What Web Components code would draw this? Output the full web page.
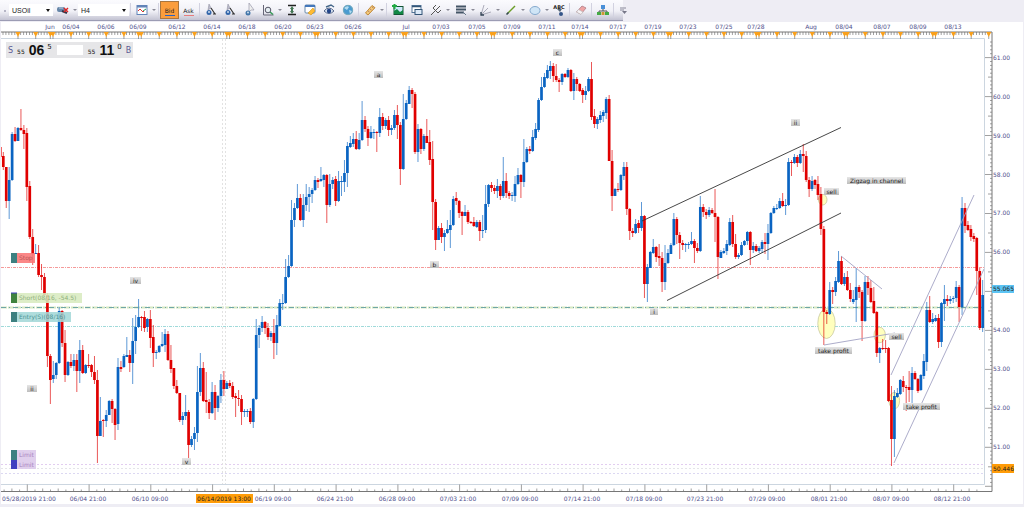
<!DOCTYPE html>
<html lang="en">
<head>
<meta charset="utf-8">
<title>USOil H4</title>
<style>
  body {
    margin: 0;
    background: #eeedf4;
    font-family: "DejaVu Sans", sans-serif;
    font-size: 6px;
    color: #50508c;
  }
</style>
</head>
<body>
<trade-app></trade-app>

<template id="app-template">
  <style>
    :host { display: block; }
    main { margin: 0 1px 3px; background: #fff; }
  </style>
  <trade-toolbar></trade-toolbar>
  <main><price-chart></price-chart></main>
</template>

<template id="toolbar-template">
  <style>
    :host { display: block; padding-bottom: 1px; }
    .bar {
      display: flex;
      align-items: stretch;
      width: fit-content;
      height: 20px;
      border-bottom: 1px solid #9c9cb4;
      background: linear-gradient(#fbfbfe, #f1f1f7 55%, #c3c3d2);
    }
    .grip { width: 9px; background: radial-gradient(circle at 5px 11px, #b5b5c5 1px, transparent 1px); }
    .sep { width: 1px; margin: 3px 1px; background: #d2d2e0; }
    .group { display: flex; }
    .draw { --tool: 18px; }
  </style>
  <div class="bar">
    <span class="grip"></span>
    <tool-select label="Symbol" value="USOil" size="44"></tool-select>
    <tool-button name="link" caret></tool-button>
    <tool-select label="Period" value="H4" size="51"></tool-select>
    <span class="sep"></span>
    <tool-button name="chart" caret></tool-button>
    <span class="sep"></span>
    <tool-button name="bid" active>Bid</tool-button>
    <tool-button name="ask">Ask</tool-button>
    <span class="sep"></span>
    <tool-button name="point"></tool-button>
    <tool-button name="point"></tool-button>
    <tool-button name="cursor"></tool-button>
    <tool-button name="zoom" caret></tool-button>
    <div class="group draw">
      <tool-button name="fit"></tool-button>
      <tool-button name="note"></tool-button>
    </div>
    <tool-button name="eye"></tool-button>
    <tool-button name="globe"></tool-button>
    <span class="sep"></span>
    <tool-button name="ruler" caret></tool-button>
    <span class="sep"></span>
    <tool-button name="image"></tool-button>
    <tool-button name="windows"></tool-button>
    <tool-button name="fork" caret></tool-button>
    <tool-button name="levels" caret></tool-button>
    <tool-button name="fan" caret></tool-button>
    <tool-button name="line" caret></tool-button>
    <div class="group draw">
      <tool-button name="ellipse" caret></tool-button>
      <tool-button name="text"><small>ABC</small></tool-button>
    </div>
    <span class="sep"></span>
    <tool-button name="eraser"></tool-button>
    <span class="sep"></span>
    <tool-button name="tree"></tool-button>
    <span class="sep"></span>
    <tool-button name="more" narrow></tool-button>
  </div>
</template>

<template id="quote-template">
  <style>
    :host { display: flex; align-items: center; gap: 5px; height: 16px; padding: 0 2px; background: #e6e6e8; }
    button {
      display: flex;
      align-items: center;
      gap: 4px;
      padding: 0;
      border: 0;
      background: none;
      color: #111;
      font: 6px "DejaVu Sans", sans-serif;
    }
    .side { font-size: 8px; color: #5a5a94; }
    .side + span { padding-top: 3px; }
    b { font: bold 14px "Liberation Sans", Arial, sans-serif; }
    .buy > span:first-child { padding-top: 3px; }
    sup { align-self: flex-start; padding-top: 1px; margin-left: -1px; font-size: 7px; }
    input { width: 26px; height: 10px; box-sizing: border-box; border: 0; padding: 0 2px; background: #fff; font-size: 6px; }
  </style>
  <button type="button"><span class="side">S</span><span>55</span><b>06</b><sup>5</sup></button>
  <input type="text" aria-label="Amount">
  <button type="button" class="buy"><span>55</span><b>11</b><sup>0</sup><span class="side">B</span></button>
</template>

<template id="chart-template">
  <style>
    :host { display: block; position: relative; }
    svg { display: block; width: 100%; height: auto; }
    text { font: 6px "DejaVu Sans", sans-serif; fill: #50508c; }
    .mid { text-anchor: middle; }
    .tag { fill: #222; }
    quote-panel { position: absolute; top: 20px; left: 5px; }
  </style>
  <svg viewBox="1 22 1022 482" role="img" aria-label="USOil four hour chart">
    <defs>
      <linearGradient id="grey" x2="0" y2="1">
        <stop offset="0" stop-color="#e6e6e6"/>
        <stop offset="1" stop-color="#bdbdbd"/>
      </linearGradient>
    </defs>
    <g id="guides" fill="none"></g>
    <g id="candles"></g>
    <g id="drawings"></g>
    <g id="orders"></g>
    <g id="tags"></g>
    <g id="axes"></g>
  </svg>
  <quote-panel></quote-panel>
</template>

<script>
const clone = (id) => document.getElementById(id).content.cloneNode(true);

// 14x14 icons
const icons = {
  link: '<rect x="1" y="4" width="8" height="5" rx="2" fill="#6686a8"/><path d="M3 5h4" stroke="#b8d0e6"/><path d="M6 8l5 2" stroke="#334" stroke-width="2"/><path d="M8 5l4 4M12 5l-4 4" stroke="#d22" stroke-width="1.4"/>',
  chart: '<rect x="2" y="2.500" width="10" height="9" fill="#fff" stroke="#6284b8"/><path d="M2 3.500h10" stroke="#6284b8" stroke-width="2"/><path d="M3 8l2-2 3 3 1-1" fill="none" stroke="#d33"/><path d="M8 8l3-2" stroke="#295"/>',
  point: '<path d="M5 1l2 4-3 2z" fill="#bbc" stroke="#889" stroke-width=".5"/><circle cx="5" cy="9.500" r="2.500" fill="#36a"/><circle cx="5" cy="9" r="1" fill="#cde"/><path d="M7 5l4 6M9 11h3" stroke="#333" stroke-width="1.200"/>',
  cursor: '<path d="M7 0v9l2-2 3 0z" fill="#eee" stroke="#99a" stroke-width=".7"/><circle cx="6" cy="10" r="2.500" fill="#47a"/><circle cx="6" cy="9.500" r="1" fill="#cde"/>',
  zoom: '<path d="M2.500 2v10h10" fill="none" stroke="#667"/><circle cx="7" cy="7" r="2.800" fill="#e6eef2" stroke="#556"/><path d="M9 9l3 2.500" stroke="#395" stroke-width="1.500"/>',
  fit: '<path d="M3 2.500h8M3 11.500h8" stroke="#222" stroke-width="1.300"/><path d="M7 3l2 3H8v2h1l-2 3-2-3h1V6H5z" fill="#475"/>',
  note: '<rect x="2" y="2" width="10" height="8" rx="1" fill="#fff" stroke="#68a"/><path d="M2 3h10" stroke="#47b" stroke-width="2"/><path d="M5 10l5-5 2 3-4 4z" fill="#fb3" stroke="#c80" stroke-width=".5"/>',
  eye: '<path d="M2 8q5-6 10 0q-5 5-10 0z" fill="#dde8f5" stroke="#568"/><circle cx="7" cy="8" r="2.200" fill="#248"/><path d="M4 4l5-2 3 2" fill="none" stroke="#468" stroke-width="1.400"/>',
  globe: '<circle cx="7" cy="7" r="5" fill="#4a9bd0"/><path d="M3 5q3-3 5-1l-2 3zM8 7l3 1-2 3z" fill="#b3dcf0"/><circle cx="7" cy="7" r="4.700" fill="none" stroke="#7ab"/>',
  ruler: '<path d="M2.500 10L9 2.500l3 2.200L5 12z" fill="#f4c978" stroke="#c18a3a"/><path d="M5 8l1.500 1M7 6l1.500 1M9 4l1.500 1" stroke="#966" stroke-width=".7"/>',
  image: '<rect x="3" y="3.500" width="9" height="8" fill="#cfeafc" stroke="#153"/><path d="M3 11V8l3-2 3 3 3-2v4z" fill="#184"/><path d="M1 3h5M3.500 1v5" stroke="#2a4" stroke-width="2"/>',
  windows: '<rect x="2" y="2.500" width="9" height="7" fill="#fff" stroke="#579"/><path d="M2 3.500h9" stroke="#357" stroke-width="1.500"/><rect x="5" y="6.500" width="7" height="5" fill="#dceaf8" stroke="#357"/>',
  fork: '<path d="M2 12l4-4M4 5l5 5M4 5l3-3M9 10l3-3M6 8l5-5" fill="none" stroke="#555"/>',
  levels: '<path d="M2 3.500h10M2 6.500h10M2 9.500h8" stroke="#456" stroke-width="1.800"/><path d="M9 9l3 3" stroke="#678"/>',
  fan: '<path d="M2 12l3-10M2 12l7-7M2 12l10-3" fill="none" stroke="#99a" stroke-width=".8"/><path d="M2 9v3h3" fill="none" stroke="#345" stroke-width="1.300"/>',
  line: '<path d="M3 11l8-8" stroke="#6b9d28" stroke-width="1.500"/><path d="M2.500 11.500l2-2" stroke="#345" stroke-width="1.500"/>',
  ellipse: '<ellipse cx="7" cy="7.500" rx="5" ry="4" fill="#cfe5f6" stroke="#86aace"/>',
  text: '<path d="M5 6h5l-2 3z" fill="#567"/><circle cx="9" cy="11" r="2" fill="#358"/>',
  eraser: '<path d="M2.500 9L8 3l4 2-5 6z" fill="#f0a4a4" stroke="#bb8c94"/><path d="M2.500 9l2-2.500L9 9l-2 2.500z" fill="#f7f3f5" stroke="#bbb" stroke-width=".7"/>',
  tree: '<path d="M3 10V8h8v2M7 8V5" fill="none" stroke="#555"/><rect x="5" y="2" width="4" height="4" fill="#4a90d8"/><path d="M1 9h4v3H1zM9 9h4v3H9z" fill="#4a4"/><path d="M5.500 9h3v3h-3z" fill="#c93"/>',
  more: '<path d="M4 5h6M4 7h4" stroke="#889"/><path d="M6 8h5l-2.500 3z" fill="#778"/>',
  bid: '<path d="M2 12.500h10" stroke="#2563c9"/>',
  ask: '<path d="M2 12.500h10" stroke="#e77c7c"/>'
};

class ToolButton extends HTMLElement {
  constructor() {
    super();
    this.attachShadow({mode: 'open'});
    const name = this.getAttribute('name');
    const caret = this.hasAttribute('caret')
      ? '<button type="button" class="caret" aria-label="More"><i></i></button>' : '';
    this.shadowRoot.innerHTML = `
      <style>
        :host { display: flex; }
        button {
          display: grid; place-items: center;
          box-sizing: border-box;
          width: var(--tool, 19px); padding: 0;
          border: 1px solid transparent; background: none;
          color: #222; font: 6px "DejaVu Sans", sans-serif;
        }
        button > * { grid-area: 1 / 1; }
        :host([narrow]) button { width: 8px; }
        :host([active]) button { background: #fb9d3c; border-color: #a9763f; margin: 1px 0; }
        :host([name="text"]) button { align-items: start; padding-top: 2px; }
        svg { width: 14px; height: 14px; overflow: visible; }
        ::slotted(small) { font-size: 5px; font-weight: bold; }
        button.caret { width: 6px; }
        i { border: 2px solid transparent; border-top-color: #8a8a96; border-bottom: 0; }
      </style>
      <button type="button" aria-label="${name}">
        <svg viewBox="0 0 14 14">${icons[name]}</svg>
        <span><slot></slot></span>
      </button>${caret}`;
  }
}

class ToolSelect extends HTMLElement {
  constructor() {
    super();
    this.attachShadow({mode: 'open'});
    this.shadowRoot.innerHTML = `
      <style>
        :host { display: grid; align-items: center; width: ${this.getAttribute('size')}px; }
        select, i { grid-area: 1 / 1; }
        select {
          appearance: none;
          width: 100%; height: 12px;
          border: 0; padding: 0 3px; margin: 0;
          background: #fff; color: #222;
          font: 7px "Liberation Sans", Arial, sans-serif;
        }
        i {
          justify-self: end; margin-right: 3px; pointer-events: none;
          border: 2px solid transparent; border-top: 3px solid #111; border-bottom: 0;
        }
      </style>
      <select aria-label="${this.getAttribute('label')}"><option>${this.getAttribute('value')}</option></select>
      <i></i>`;
  }
}

// colour + body top, body bottom, high, low (chart units), one entry per 4h bar
const bars = `
r156,167,152,170 r167,201,167,208 b180,201,167,219 b134,180,132,181 r134,141,127,142 b128,141,127,141 r128,130,109,131 r130,134,125,149 r133,187,128,201 r186,237,181,239
r237,254,229,265 b253,254,244,254 r253,275,245,277 r275,277,264,290 r277,295,273,297 r295,356,293,367 r356,380,354,404 b375,379,361,383 b363,375,362,379 b311,363,307,364
r311,343,310,347 r343,375,330,382 b362,375,361,376 r362,366,354,368 b360,366,354,371 r360,371,354,392 b350,371,340,383 r350,373,345,374 b365,373,364,374 r365,366,354,368
r365,372,364,377 r372,380,356,384 r380,436,370,463 b421,436,397,436 r420,421,419,437 b415,421,410,427 b401,415,400,415 r401,409,399,423 r409,425,408,440 b367,424,358,430
r367,369,361,372 b356,367,354,368 b355,357,337,357 r355,363,350,372 b341,363,318,384 b327,341,315,354 b317,327,299,328 r317,318,316,331 r317,328,311,332 b319,327,318,332
r319,338,310,348 r337,353,325,367 b352,353,350,359 b346,352,345,353 b344,346,332,347 b334,345,329,352 r334,360,331,361 r360,369,345,373 r368,386,368,389 r386,393,380,394
r393,420,393,422 b416,420,412,425 b412,416,395,420 r412,445,410,458 b439,445,436,447 b433,439,427,450 b392,433,366,442 b368,392,353,396 r368,401,362,402 r400,402,372,413
r402,413,399,419 b392,413,382,414 r392,408,385,420 b396,408,395,412 b380,396,374,403 r380,389,371,396 b383,389,381,389 r383,386,380,388 r386,397,382,399 r396,398,393,417
r398,399,390,406 r399,412,395,425 b411,412,409,417 b411,412,409,417 r411,422,408,424 b399,422,398,428 b335,399,319,400 b328,335,325,348 b322,328,316,332 r322,328,321,334
r328,337,323,340 b333,337,331,341 r333,343,319,359 b325,343,315,355 b303,326,299,326 b303,304,294,310 b277,303,259,304 b266,277,255,278 b220,266,200,267 b208,220,203,227
b198,208,184,209 r198,220,194,221 b205,220,194,227 b197,205,184,211 b194,197,187,212 b190,194,188,203 b180,190,176,191 r180,182,178,188 b179,181,167,182 b175,180,174,187
r175,205,174,223 b184,205,174,207 b180,184,177,189 r179,201,176,206 b181,201,171,202 b181,182,176,196 b173,182,160,192 b146,173,142,187 b143,147,136,148 b139,144,133,147
r139,149,131,150 b140,149,133,150 b120,140,101,141 r120,129,116,132 r129,138,126,146 b132,138,126,139 b132,133,129,139 r132,133,131,152 b117,133,108,137 r117,126,113,130
b120,126,118,129 r120,130,116,136 b128,130,125,135 b115,128,110,130 r115,125,105,139 r125,169,122,185 b119,169,94,170 b103,119,100,120 b90,104,86,104 r90,94,88,108
r94,152,92,154 b129,152,124,162 r129,149,128,154 b136,149,134,151 r136,143,119,143 r142,160,130,165 r159,202,141,230 r202,240,199,250 b228,240,226,240 r228,237,223,243
b233,237,230,251 b229,233,220,234 b225,230,210,248 b199,225,196,226 r198,201,192,205 r201,213,200,218 r212,216,211,235 b212,216,205,216 r212,222,210,224 r222,223,221,224
r222,226,217,227 b222,227,220,228 r222,231,220,241 b230,231,215,238 b204,230,185,233 b185,204,184,207 r185,188,182,192 r188,191,185,194 b186,191,179,198 r186,196,184,200
b181,196,157,198 r181,193,173,198 r193,196,191,199 b195,196,192,201 b184,196,176,202 b175,184,168,185 r175,182,174,198 b162,182,139,187 b149,162,147,163 r149,151,146,154
b137,151,130,152 b129,138,123,140 b100,130,98,132 b87,100,77,101 b77,87,73,88 b70,78,65,79 b66,71,61,79 r66,76,63,82 r76,80,64,82 r80,82,78,92
b74,82,73,85 r74,77,73,78 b70,77,68,78 r70,91,69,92 b79,91,73,100 r79,84,77,91 r84,91,83,92 r90,95,88,103 b91,95,86,100 b79,91,77,92
r79,117,62,120 r116,124,109,128 b119,124,117,129 b115,120,111,123 b112,116,110,122 b99,113,97,119 r99,161,95,161 r161,196,150,211 b189,196,188,196 r189,190,183,192
b175,190,174,191 b167,176,162,180 r167,209,162,215 r209,231,208,240 r231,233,228,237 b224,233,219,234 r223,228,220,233 b216,228,202,231 r216,284,215,298 b267,284,264,302
b252,268,251,268 b247,253,239,254 r247,257,246,262 r256,258,244,266 r258,282,252,292 b263,282,245,290 b253,263,249,264 b245,254,243,254 b219,245,213,246 r219,235,217,244
r235,243,232,259 r243,245,240,250 b244,245,243,252 b244,245,242,249 b241,244,232,245 r241,248,239,263 r248,251,243,253 b207,251,196,252 r207,212,204,217 r212,215,209,219
b210,215,207,217 r210,213,208,214 r213,217,189,242 r217,257,216,279 b252,258,250,258 b251,253,248,254 b244,251,240,255 b222,245,218,246 r222,244,215,247 r244,257,234,259
b255,257,253,259 b245,255,242,256 b241,245,240,246 b232,241,231,245 r232,250,231,265 b246,250,242,253 r246,251,244,252 b248,251,246,253 b242,249,240,253 r242,244,233,254
b233,244,224,260 b213,233,212,234 b208,213,206,214 b208,209,204,210 b201,208,198,209 r201,206,193,207 b205,206,199,215 b162,205,158,206 r162,163,160,176 b157,163,154,164
r157,163,155,167 b154,163,150,164 r154,156,144,172 r156,180,151,182 r180,189,177,197 b181,189,176,191 r180,185,179,189 r184,195,176,200 r194,229,187,235 r229,312,226,345
r312,314,310,324 b290,314,282,315 r290,292,287,304 b281,292,277,296 b261,282,251,283 r261,284,256,285 b277,284,273,286 r277,290,271,291 r290,299,283,302 b299,302,290,304
b287,300,268,322 r287,292,285,298 r292,321,290,341 b282,321,276,322 r282,288,276,295 r288,302,280,303 r301,313,287,314 r312,353,311,357 b348,353,347,363 r348,349,339,350
r348,349,340,353 r348,401,347,402 r400,439,386,466 b396,439,390,457 b393,397,388,398 b380,394,379,395 r381,387,376,392 r387,388,385,411 r387,390,371,402 b373,390,367,406
r373,379,371,380 r379,391,378,393 b375,390,374,391 b361,376,354,379 b310,362,302,371 r310,322,296,323 b319,322,313,324 b318,321,315,322 r318,342,314,348 b303,342,302,347
b299,304,285,321 r299,301,295,306 b299,301,296,304 b298,299,296,303 b287,298,281,302 r287,307,285,322 b208,307,197,315 r208,226,203,233 r225,230,221,231 r229,237,225,241
r236,239,233,242 r238,271,237,295 r271,328,268,330 b295,328,280,332`.trim().split(/\s+/);

const topLabels = {
  'Jun': 50, '06/04': 71, '06/06': 106, '06/09': 138, '06/12': 177, '06/14': 212, '06/18': 247,
  '06/20': 283, '06/23': 315, '06/26': 353, 'Jul': 406, '07/03': 441, '07/05': 477, '07/09': 512,
  '07/11': 547, '07/14': 580, '07/17': 618, '07/19': 653, '07/23': 688, '07/25': 724, '07/28': 756,
  'Aug': 811, '08/04': 844, '08/07': 882, '08/09': 918, '08/13': 953
};

const bottomLabels = ['05/28/2019 21:00', '06/04 21:00', '06/10 09:00', '', '06/19 09:00', '06/24 21:00',
  '06/28 09:00', '07/03 21:00', '07/09 09:00', '07/14 21:00', '07/18 09:00', '07/23 21:00',
  '07/29 09:00', '08/01 21:00', '08/07 09:00', '08/12 21:00'];

// text, left, top, width
const tags = [
  ['a', 374, 71, 9], ['c', 553, 49, 9], ['iv', 130, 277, 11], ['ii', 27, 385, 10], ['v', 182, 458, 9],
  ['b', 430, 261, 9], ['i', 650, 308, 8], ['ii', 791, 119, 9], ['sell', 824, 188, 15],
  ['Zigzag in channel', 847, 177, 59], ['sell', 889, 333, 15], ['take profit', 815, 347, 37],
  ['take profit', 903, 403, 37]
];

// text, top, height, width, marker, fill, text colour
const orders = [
  ['Stop', 253, 10, 18, '#3d8080', '#fb7676', '#b85656'],
  ['Short(08/16, -54.5)', 293, 10, 65, '#3f833f', '#d8eabf', '#8fb07c'],
  ['Entry(S)(08/16)', 312, 10, 54, '#3d8080', '#a4d8d8', '#4d9494'],
  ['Limit', 450, 10, 19, '#3d8080', '#dcc8ea', '#a984c0'],
  ['Limit', 460, 9, 19, '#4040c0', '#dcc8ea', '#a984c0']
];

class PriceChart extends HTMLElement {
  constructor() {
    super();
    this.attachShadow({mode: 'open'});
    this.shadowRoot.appendChild(clone('chart-template'));
    this.fill('guides', this.drawGuides());
    this.fill('candles', this.drawCandles());
    this.fill('drawings', this.drawDrawings());
    this.fill('orders', this.drawOrders());
    this.fill('tags', this.drawTags());
    this.fill('axes', this.drawAxes());
  }

  fill(id, markup) {
    this.shadowRoot.getElementById(id).innerHTML = markup;
  }

  drawGuides() {
    const row = (y, color, dash, width = 1) =>
      `<path d="M1 ${y}H984" stroke="${color}" stroke-dasharray="${dash}" stroke-width="${width}"/>`;
    return row(267.5, '#f59a9a', '3 1 1 1')
      + row(307.5, '#d6e8c2', '6 1', 2) + row(307.5, '#6fa6a6', '5 3 1 3')
      + row(326.5, '#a0dada', '3 1 1 1')
      + row(464.5, '#e2cdf0', '2 2') + row(468.5, '#e4e4e8', '2 2') + row(473.5, '#dcd8f2', '2 2')
      + '<path d="M222.500 39V484M225.500 39V484" stroke="#e2e2e2" stroke-dasharray="2 2"/>'
      + '<g fill="#ffffbe" stroke="#c9c9a0" stroke-width=".8">'
      + '<ellipse cx="826.500" cy="323.500" rx="8.700" ry="15"/><ellipse cx="822.700" cy="199.700" rx="4.300" ry="5.300"/>'
      + '<ellipse cx="879.700" cy="335" rx="5.700" ry="7.700"/><ellipse cx="894.300" cy="400.700" rx="5.300" ry="8.300"/></g>';
  }

  drawCandles() {
    let out = '<path d="M1.500 147v10" stroke="#e00" opacity=".6"/>';
    bars.forEach((bar, i) => {
      const color = bar[0] === 'r' ? '#e00000' : '#0a64c2';
      const [top, bottom, high, low] = bar.slice(1).split(',').map(Number);
      const x = 3.3 + i * 2.941;
      out += `<path d="M${x.toFixed(2)} ${high}V${low}" stroke="${color}" opacity=".65"/>`
        + `<rect x="${(x - 1.35).toFixed(2)}" y="${top}" width="2.7" height="${bottom - top}" fill="${color}"/>`;
    });
    return out;
  }

  drawDrawings() {
    return '<path d="M642 221L841 127.500M667 300.500L841 213" stroke="#333" stroke-width=".9"/>'
      + '<path d="M841 256l41 33M824 345l71-12M891 375l83-180M894 463l90-194" fill="none" stroke="#a3a3c4" stroke-width=".9"/>';
  }

  drawOrders() {
    return orders.map(([text, y, h, w, marker, fill, color]) =>
      `<rect x="11" y="${y}" width="6" height="${h}" fill="${marker}"/>`
      + `<rect x="17" y="${y}" width="${w}" height="${h}" fill="${fill}" opacity=".88"/>`
      + `<text x="19" y="${y + 7}" style="fill:${color}">${text}</text>`).join('')
      + '<path d="M11 293h6" stroke="#4040c0"/>';
  }

  drawTags() {
    return tags.map(([text, x, y, w]) =>
      `<rect x="${x}" y="${y}" width="${w}" height="7" fill="url(#grey)"/>`
      + `<text class="mid tag" x="${x + w / 2}" y="${y + 6}">${text}</text>`).join('');
  }

  drawAxes() {
    let ticks = '';
    let arrows = '';
    let labels = '';

    // frame of the plot and the rulers round it
    let out = '<path d="M1 38.500H984.500V484.500H1" fill="none" stroke="#ccd6e0"/>'
      + '<path d="M1 32H992V491.500H1" fill="none" stroke="#777"/>';

    for (let x = 3; x < 990; x += 2.941) ticks += `M${x.toFixed(1)} 32v3`;
    const arrow = (x) => {
      arrows += `M${x - 2.5} 32h5l-2.5 5z`;
      ticks += `M${x} 36v3`;
    };
    for (let week = 0; week < 12; week++) {
      const start = 18 + week * 88.25;
      [0, 17.7, 32.3, 35, 53, 70.7].forEach((d) => { if (start + d < 991) arrow(start + d); });
    }
    for (const [text, x] of Object.entries(topLabels)) {
      labels += `<text class="mid" x="${x}" y="29">${text}</text>`;
    }

    for (let i = -3; i < 125; i++) {
      const x = 27.3 + i * 7.72;
      if (x > 984) break;
      const size = i % 8 === 0 ? 7 : i % 2 === 0 ? 3 : 2;
      ticks += `M${x.toFixed(1)} 491.5v-${size}`;
    }
    bottomLabels.forEach((text, i) => {
      const x = Math.max(29, Math.round(26 + i * 61.75));
      labels += `<text class="mid" x="${x}" y="501">${text}</text>`;
    });

    // 38.97 units for one dollar; the last price covers the label of 55
    for (let i = -4; i <= 110; i++) {
      const y = 57.6 + i * 3.897;
      const size = i % 10 === 0 ? 7 : i % 5 === 0 ? 4 : 2;
      ticks += `M992 ${y.toFixed(1)}h-${size}`;
      if (i >= 0 && i % 10 === 0 && i <= 100 && i !== 60) {
        labels += `<text x="993" y="${Math.round(y + 2)}">${61 - i / 10}.00</text>`;
      }
    }

    out += `<path d="${ticks}" stroke="#777" stroke-width=".7"/><path d="${arrows}" fill="#f9a01b"/>${labels}`;
    out += '<rect x="992" y="285" width="22" height="8" fill="#5cc4f4"/><text class="tag" x="993" y="291">55.065</text>'
      + '<rect x="992" y="464" width="22" height="9" fill="#ff9c08"/><text class="tag" x="993" y="471">50.446</text>'
      + '<rect x="196" y="494" width="57" height="9" fill="#ff9c08"/><text class="mid tag" x="224" y="501">06/14/2019 13:00</text>';
    return out;
  }
}

class QuotePanel extends HTMLElement {
  constructor() {
    super();
    this.attachShadow({mode: 'open'});
    this.shadowRoot.appendChild(clone('quote-template'));
  }
}

class TradeToolbar extends HTMLElement {
  constructor() {
    super();
    this.attachShadow({mode: 'open'});
    this.shadowRoot.appendChild(clone('toolbar-template'));
  }
}

class TradeApp extends HTMLElement {
  constructor() {
    super();
    this.attachShadow({mode: 'open'});
    this.shadowRoot.appendChild(clone('app-template'));
  }
}

// leaves first, the app last
window.customElements.define('tool-button', ToolButton);
window.customElements.define('tool-select', ToolSelect);
window.customElements.define('quote-panel', QuotePanel);
window.customElements.define('price-chart', PriceChart);
window.customElements.define('trade-toolbar', TradeToolbar);
window.customElements.define('trade-app', TradeApp);
</script>
</body>
</html>
